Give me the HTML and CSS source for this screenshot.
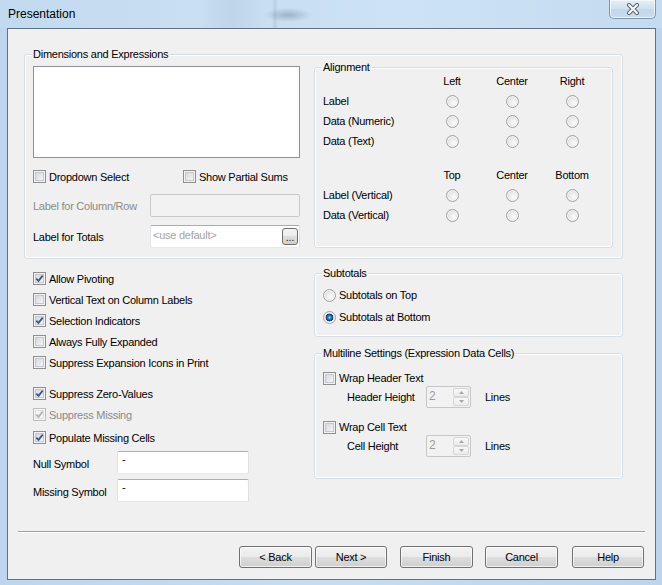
FILE: index.html
```html
<!DOCTYPE html>
<html>
<head>
<meta charset="utf-8">
<title>Presentation</title>
<link rel="stylesheet" href="styles.css">
</head>
<body>
<div class="window">
  <div class="titlebar">
    <span class="title">Presentation</span>
    <div class="close">
      <svg width="14" height="12" viewBox="0 0 14 12"><path d="M3 2 L11 10 M11 2 L3 10" stroke="#5a6470" stroke-width="4" stroke-linecap="round" fill="none"/><path d="M3 2 L11 10 M11 2 L3 10" stroke="#ffffff" stroke-width="2" stroke-linecap="round" fill="none"/></svg>
    </div>
  </div>
  <div class="client">
    <div class="content">
      <div class="group main-group">
        <span class="gtitle">Dimensions and Expressions</span>
        <div class="dims">
          <div class="listbox"></div>
          <div class="check-pair">
            <div class="check"><span class="cb"></span>Dropdown Select</div>
            <div class="check"><span class="cb"></span>Show Partial Sums</div>
          </div>
          <div class="field-row r1">
            <span class="flabel disabled-text">Label for Column/Row</span>
            <span class="input input-disabled"></span>
          </div>
          <div class="field-row r2">
            <span class="flabel">Label for Totals</span>
            <span class="input"><span class="placeholder">&lt;use default&gt;</span><span class="ellipsis">...</span></span>
          </div>
        </div>
        <div class="group align-group">
          <span class="gtitle">Alignment</span>
          <div class="align-grid">
            <span></span><span class="colh">Left</span><span class="colh">Center</span><span class="colh">Right</span>
            <span>Label</span><span class="rb"></span><span class="rb"></span><span class="rb"></span>
            <span>Data (Numeric)</span><span class="rb"></span><span class="rb"></span><span class="rb"></span>
            <span>Data (Text)</span><span class="rb"></span><span class="rb"></span><span class="rb"></span>
          </div>
          <div class="align-grid second">
            <span></span><span class="colh">Top</span><span class="colh">Center</span><span class="colh">Bottom</span>
            <span>Label (Vertical)</span><span class="rb"></span><span class="rb"></span><span class="rb"></span>
            <span>Data (Vertical)</span><span class="rb"></span><span class="rb"></span><span class="rb"></span>
          </div>
        </div>
      </div>
      <div class="lower">
        <div class="options">
          <div class="check"><span class="cb checked"><svg viewBox="0 0 11 11"><path d="M2.3 5.6 L4.5 7.9 L8.7 2.6" /></svg></span>Allow Pivoting</div>
          <div class="check"><span class="cb"></span>Vertical Text on Column Labels</div>
          <div class="check"><span class="cb checked"><svg viewBox="0 0 11 11"><path d="M2.3 5.6 L4.5 7.9 L8.7 2.6" /></svg></span>Selection Indicators</div>
          <div class="check"><span class="cb"></span>Always Fully Expanded</div>
          <div class="check"><span class="cb"></span>Suppress Expansion Icons in Print</div>
          <div class="check gap-top"><span class="cb checked"><svg viewBox="0 0 11 11"><path d="M2.3 5.6 L4.5 7.9 L8.7 2.6" /></svg></span>Suppress Zero-Values</div>
          <div class="check disabled-text"><span class="cb checked cb-disabled"><svg viewBox="0 0 11 11"><path d="M2.3 5.6 L4.5 7.9 L8.7 2.6" /></svg></span>Suppress Missing</div>
          <div class="check pop"><span class="cb checked"><svg viewBox="0 0 11 11"><path d="M2.3 5.6 L4.5 7.9 L8.7 2.6" /></svg></span>Populate Missing Cells</div>
          <div class="sym-row first">
            <span class="sym-label">Null Symbol</span>
            <span class="sym-input">-</span>
          </div>
          <div class="sym-row">
            <span class="sym-label">Missing Symbol</span>
            <span class="sym-input">-</span>
          </div>
        </div>
        <div class="right-col">
          <div class="group subtotals">
            <span class="gtitle">Subtotals</span>
            <div class="radio-row"><span class="rb"></span>Subtotals on Top</div>
            <div class="radio-row"><span class="rb on"></span>Subtotals at Bottom</div>
          </div>
          <div class="group multiline">
            <span class="gtitle">Multiline Settings (Expression Data Cells)</span>
            <div class="check ml-check"><span class="cb"></span>Wrap Header Text</div>
            <div class="sub-row">
              <span class="sub-label">Header Height</span>
              <span class="spin"><span class="spin-val">2</span><span class="spin-btns"><span class="spin-btn"><svg width="5" height="3" viewBox="0 0 5 3"><path d="M0 3 L2.5 0 L5 3 Z" fill="#a8a8a8"/></svg></span><span class="spin-btn"><svg width="5" height="3" viewBox="0 0 5 3"><path d="M0 0 L2.5 3 L5 0 Z" fill="#a8a8a8"/></svg></span></span></span>
              <span class="lines">Lines</span>
            </div>
            <div class="check ml-check second"><span class="cb"></span>Wrap Cell Text</div>
            <div class="sub-row">
              <span class="sub-label">Cell Height</span>
              <span class="spin"><span class="spin-val">2</span><span class="spin-btns"><span class="spin-btn"><svg width="5" height="3" viewBox="0 0 5 3"><path d="M0 3 L2.5 0 L5 3 Z" fill="#a8a8a8"/></svg></span><span class="spin-btn"><svg width="5" height="3" viewBox="0 0 5 3"><path d="M0 0 L2.5 3 L5 0 Z" fill="#a8a8a8"/></svg></span></span></span>
              <span class="lines">Lines</span>
            </div>
          </div>
        </div>
      </div>
    </div>
    <div class="footer">
      <div class="sep"></div>
      <div class="buttons">
        <span class="btn">&lt; Back</span>
        <span class="btn next">Next &gt;</span>
        <span class="btn finish">Finish</span>
        <span class="btn cancel">Cancel</span>
        <span class="btn help">Help</span>
      </div>
    </div>
  </div>
</div>
</body>
</html>
```

FILE: styles.css
```css
* { box-sizing: border-box; }
html, body { margin: 0; padding: 0; }
body {
  width: 662px;
  height: 585px;
  overflow: hidden;
  background: #c3daef;
  font-family: "Liberation Sans", Arial, sans-serif;
  font-size: 11px;
  letter-spacing: -0.25px;
  color: #000;
}
.window {
  width: 662px;
  height: 585px;
  display: flex;
  flex-direction: column;
  background: linear-gradient(to right, #bdd6ee, #c6ddf1 50%, #bcd5ec);
}
.titlebar {
  height: 28px;
  flex: none;
  display: flex;
  justify-content: space-between;
  align-items: flex-start;
  background:
    radial-gradient(ellipse 24px 7px at 288px 15px, rgba(80, 100, 120, 0.35), rgba(80, 100, 120, 0) 100%),
    linear-gradient(to right, rgba(0,0,0,0) 272px, rgba(110,130,150,0.18) 275px, rgba(0,0,0,0) 278px),
    linear-gradient(to right, #c2daef 0, #c9dff2 30%, #bed5ea 35%, #c8def1 40%, #cde3f5 60%, #c4dbf0 100%);
}
.title {
  font-size: 12px;
  letter-spacing: 0;
  line-height: 28px;
  padding-left: 8px;
}
.close {
  width: 47px;
  height: 19px;
  margin-right: 6px;
  border: 1px solid #8096ad;
  border-top: none;
  border-radius: 0 0 5px 5px;
  background: linear-gradient(#e4eef7, #cfe0ef 50%, #c3d7ea 51%, #cadcee);
  box-shadow: inset 0 0 0 1px rgba(255, 255, 255, 0.6);
  display: flex;
  align-items: center;
  justify-content: center;
}
.close svg { display: block; }
.client {
  flex: 1;
  margin: 0 6px 5px 7px;
  border: 1px solid #5f7386;
  background: #f0f0f0;
  display: flex;
  flex-direction: column;
}
.content { padding: 25px 0 0 16px; }
.group {
  position: relative;
  border: 1px solid #d5dfe5;
  border-radius: 3px;
  box-shadow: inset 0 0 0 1px #fff;
}
.gtitle {
  position: absolute;
  top: -7px;
  left: 7px;
  padding: 0 1px;
  background: #f0f0f0;
  line-height: 13px;
  white-space: nowrap;
}
.main-group {
  width: 599px;
  height: 205px;
  display: flex;
  align-items: flex-start;
}
.dims {
  margin: 11px 0 0 8px;
  width: 267px;
  display: flex;
  flex-direction: column;
}
.listbox {
  height: 92px;
  background: #fff;
  border: 1px solid #8e9196;
}
.check-pair { display: flex; margin-top: 8px; }
.check-pair .check:first-child { width: 150px; }
.check {
  display: flex;
  align-items: center;
  height: 21px;
  gap: 3px;
  white-space: nowrap;
}
.field-row { display: flex; align-items: center; height: 23px; }
.r1 { margin-top: 7px; }
.r2 { margin-top: 8px; }
.flabel { width: 117px; white-space: nowrap; }
.disabled-text { color: #8a8a8a; }
.input {
  width: 150px;
  height: 23px;
  border: 1px solid;
  border-color: #abadb3 #dbdfe6 #e3e9ef #e2e3ea;
  border-radius: 2px;
  background: #fff;
  display: flex;
  align-items: center;
}
.input-disabled {
  background: #f2f2f2;
  border-color: #c9c9c9;
}
.placeholder {
  flex: 1;
  color: #a3a3a3;
  padding-left: 2px;
  margin-top: -3px;
}
.ellipsis {
  width: 16px;
  height: 17px;
  margin-right: 1px;
  border: 1px solid #707070;
  border-radius: 3px;
  background: linear-gradient(#f3f3f3, #ececec 50%, #dedede 50%, #d0d0d0);
  font-size: 10px;
  letter-spacing: 0;
  line-height: 17px;
  text-align: center;
}
.align-group {
  margin: 12px 0 0 14px;
  width: 299px;
  height: 181px;
  padding: 3px 0 0 8px;
}
.align-grid {
  display: grid;
  grid-template-columns: 99px 60px 60px 60px;
  grid-auto-rows: 20px;
  align-items: center;
  white-space: nowrap;
}
.align-grid.second { margin-top: 14px; }
.colh { justify-self: center; }
.align-grid .rb { justify-self: center; }
.rb {
  width: 13px;
  height: 13px;
  flex: none;
  border-radius: 50%;
  border: 1px solid #a2a2a2;
  background: radial-gradient(circle at 62% 62%, #fbfbfb 0%, #e6e6e6 55%, #d0d0d0 100%);
  box-shadow: inset 0 0 0 1px #f4f4f4;
}
.rb.on {
  background:
    radial-gradient(circle at 50% 50%, #8fd3f6 0, #2f8ac6 1.5px, #17508a 3px, #0e3560 3.6px, rgba(14, 53, 96, 0) 4.2px),
    radial-gradient(circle at 62% 62%, #fbfbfb 0%, #e6e6e6 55%, #d0d0d0 100%);
}
.lower {
  display: grid;
  grid-template-columns: 290px 309px;
  align-items: start;
}
.options {
  padding: 9px 0 0 9px;
  display: flex;
  flex-direction: column;
}
.cb {
  width: 13px;
  height: 13px;
  flex: none;
  border: 1px solid #8e8f8f;
  background: linear-gradient(135deg, #ccd0d6 0%, #eef0f2 70%, #f7f7f7 100%);
  box-shadow: inset 0 0 0 1px #f3f3f3, inset 0 0 0 2px #c4c8cd;
}
.cb svg { display: block; width: 11px; height: 11px; }
.cb svg path { fill: none; stroke: #3e5588; stroke-width: 1.8; stroke-linejoin: miter; }
.cb-disabled { border-color: #bcbcbc; background: #f4f4f4; box-shadow: inset 0 0 0 1px #f7f7f7, inset 0 0 0 2px #e0e0e0; }
.cb-disabled svg path { stroke: #b2b2b2; }
.gap-top { margin-top: 10px; }
.pop { margin-top: 2px; }
.sym-row { display: flex; align-items: flex-start; height: 23px; margin-top: 5px; }
.sym-row.first { margin-top: 3px; }
.sym-label { width: 84px; line-height: 13px; margin-top: 7px; white-space: nowrap; }
.sym-input {
  width: 132px;
  height: 23px;
  border: 1px solid;
  border-color: #abadb3 #dbdfe6 #e3e9ef #e2e3ea;
  border-radius: 2px;
  background: #fff;
  padding: 1px 0 0 4px;
  line-height: 13px;
}
.subtotals {
  margin-top: 14px;
  height: 64px;
  padding: 10px 0 0 8px;
}
.radio-row {
  display: flex;
  align-items: center;
  height: 22px;
  gap: 3px;
  white-space: nowrap;
}
.multiline {
  margin-top: 16px;
  height: 126px;
  padding: 16px 0 0 8px;
}
.ml-check { height: 16px; }
.ml-check.second { margin-top: 11px; }
.sub-row {
  display: flex;
  align-items: center;
  height: 22px;
  padding-left: 24px;
}
.sub-label { width: 79px; white-space: nowrap; }
.spin {
  width: 45px;
  height: 22px;
  display: flex;
  border: 1px solid #c6c6c6;
  border-radius: 2px;
  background: #f2f2f2;
  padding: 1px;
}
.spin-val {
  flex: 1;
  color: #9c9c9c;
  padding-left: 1px;
  font-size: 12px;
  line-height: 16px;
}
.spin-btns { width: 16px; display: flex; flex-direction: column; }
.spin-btn {
  flex: 1;
  border: 1px solid #d6d6d6;
  border-radius: 2px;
  background: linear-gradient(#f8f8f8, #ececec);
  display: flex;
  align-items: center;
  justify-content: center;
}
.spin-btn svg { display: block; }
.lines { margin-left: 14px; }
.footer { margin-top: auto; }
.sep {
  margin: 0 10px;
  border-top: 1px solid #a0a0a0;
  border-bottom: 1px solid #fff;
}
.buttons {
  display: flex;
  justify-content: flex-end;
  padding: 13px 11px 11px 0;
}
.btn {
  width: 73px;
  height: 22px;
  border: 1px solid #707070;
  border-radius: 3px;
  background: linear-gradient(#f2f2f2 0%, #ebebeb 50%, #dddddd 51%, #cfcfcf 100%);
  box-shadow: inset 0 0 0 1px rgba(255, 255, 255, 0.7);
  display: flex;
  align-items: center;
  justify-content: center;
  white-space: nowrap;
}
.next { margin-left: 3px; width: 72px; }
.finish { margin-left: 13px; }
.cancel { margin-left: 12px; }
.help { margin-left: 14px; width: 72px; }
```
